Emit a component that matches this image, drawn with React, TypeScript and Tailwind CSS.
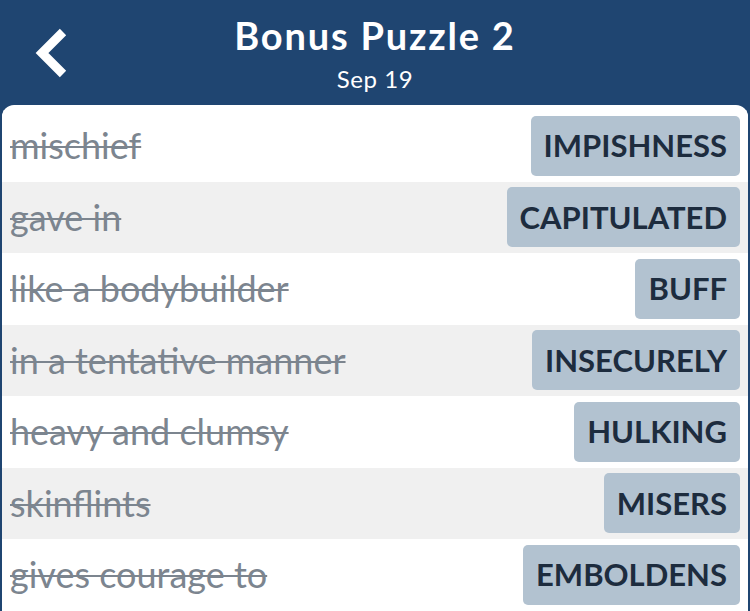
const rows = [
  { clue: 'mischief', answer: 'IMPISHNESS' },
  { clue: 'gave in', answer: 'CAPITULATED' },
  { clue: 'like a bodybuilder', answer: 'BUFF' },
  { clue: 'in a tentative manner', answer: 'INSECURELY' },
  { clue: 'heavy and clumsy', answer: 'HULKING' },
  { clue: 'skinflints', answer: 'MISERS' },
  { clue: 'gives courage to', answer: 'EMBOLDENS' },
]

export default function App() {
  return (
    <div className="h-[611px] w-[750px] overflow-hidden bg-[#1f4571] font-['Lato',sans-serif]">
      <div className="relative flex h-[105px] flex-col items-center pt-[12px] text-white">
        <svg className="absolute left-[30px] top-[20px]" width="50" height="66" viewBox="0 0 50 66">
          <polyline points="33,12 12,33 33,54" fill="none" stroke="white" strokeWidth="9" strokeLinejoin="miter" />
        </svg>
        <div className="text-[38px] font-bold leading-[46px] tracking-[1.8px]">Bonus Puzzle 2</div>
        <div className="mt-[6px] text-[24px] leading-[29px] tracking-[0.6px]">Sep 19</div>
      </div>
      <div className="mx-[2px] h-full overflow-hidden rounded-t-[12px] bg-white pt-[5px]">
        {rows.map((r, i) => (
          <div
            key={r.clue}
            className={`flex h-[71.5px] items-center justify-between pl-[8px] pr-[8px] ${i % 2 === 1 ? 'bg-[#f0f0f0]' : 'bg-white'}`}
          >
            <span className="text-[36px] leading-[43px] text-[#7c858f] line-through decoration-[2px]">{r.clue}</span>
            <span className="flex h-[60px] items-center rounded-[5px] bg-[#b2c2d0] px-[13px] text-[31px] font-bold leading-[37px] text-[#1d2c3e]">
              {r.answer}
            </span>
          </div>
        ))}
      </div>
    </div>
  )
}
